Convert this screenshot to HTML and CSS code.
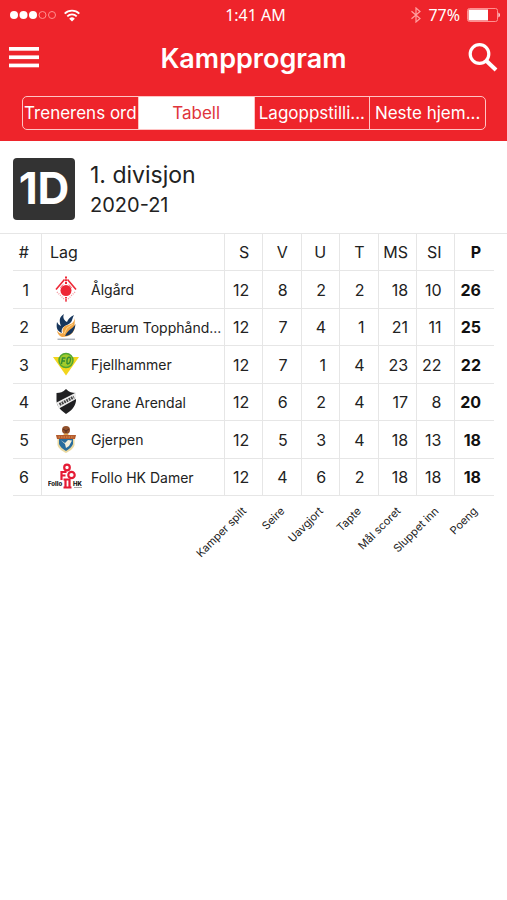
FILE: index.html
```html
<!DOCTYPE html>
<html lang="no">
<head>
  <meta charset="UTF-8">
  <meta name="viewport" content="width=device-width, initial-scale=1.0">
  <title>Kampprogram</title>
  <link rel="stylesheet" href="styles.css">
</head>
<body>

  <header class="top">
    <div class="status-bar">
      <div class="status-left">
        <svg width="46" height="10" viewBox="0 0 46 10">
          <g fill="#fff">
            <circle cx="4" cy="5" r="4"/>
            <circle cx="13.500" cy="5" r="4"/>
            <circle cx="23" cy="5" r="4"/>
          </g>
          <g fill="none" stroke="#ff8f8f" stroke-width="1">
            <circle cx="32.500" cy="5" r="3.500"/>
            <circle cx="42" cy="5" r="3.500"/>
          </g>
        </svg>
        <svg width="16" height="13" viewBox="0 0 16 13">
          <g fill="none" stroke="#fff" stroke-width="1.800">
            <path d="M0.700 4.600a10.300 10.300 0 0 1 14.600 0"/>
            <path d="M3.300 7.400a6.600 6.600 0 0 1 9.400 0"/>
          </g>
          <path d="M8 12.600L5.200 9.700a4 4 0 0 1 5.600 0z" fill="#fff"/>
        </svg>
      </div>
      <div class="status-time">1:41 AM</div>
      <div class="status-right">
        <svg width="10" height="16" viewBox="0 0 10 16">
          <path d="M0.500 4.200L9 11.500L5 15V1L9 4.500L0.500 11.800" fill="none" stroke="#ffa0a0" stroke-width="1.200"/>
        </svg>
        <span>77%</span>
        <svg width="34" height="14" viewBox="0 0 34 14">
          <rect x="0.500" y="0.500" width="30" height="13" rx="2" fill="none" stroke="#ff9090"/>
          <rect x="1.500" y="1.500" width="19.500" height="11" fill="#fff"/>
          <path d="M31.500 4.500a3 3 0 0 1 0 5z" fill="#fff"/>
        </svg>
      </div>
    </div>

    <div class="navbar">
      <button class="icon-btn" aria-label="Meny">
        <svg width="30" height="22" viewBox="0 0 30 22" fill="#fff">
          <rect y="0" width="30" height="3.700"/>
          <rect y="8.400" width="30" height="3.700"/>
          <rect y="16.600" width="30" height="3.700"/>
        </svg>
      </button>
      <h1>Kampprogram</h1>
      <button class="icon-btn" aria-label="Søk">
        <svg width="30" height="30" viewBox="0 0 30 30" fill="none" stroke="#fff">
          <circle cx="11.500" cy="11" r="9.300" stroke-width="3.200"/>
          <path d="M18 17.500L28 27" stroke-width="4"/>
        </svg>
      </button>
    </div>

    <nav class="tabs">
      <button class="tab">Trenerens ord</button>
      <button class="tab active">Tabell</button>
      <button class="tab">Lagoppstilli...</button>
      <button class="tab">Neste hjem...</button>
    </nav>
  </header>

  <section class="division">
    <div class="badge">1D</div>
    <div>
      <h2>1. divisjon</h2>
      <p>2020-21</p>
    </div>
  </section>

  <div class="table-wrap">
    <table class="standings">
      <colgroup>
        <col class="col-rank">
        <col class="col-team">
        <col span="7">
      </colgroup>
      <thead>
        <tr><th>#</th><th class="team-head">Lag</th><th>S</th><th>V</th><th>U</th><th>T</th><th class="ms">MS</th><th>SI</th><th class="points">P</th></tr>
      </thead>
      <tbody>
        <tr>
          <td>1</td>
          <td><div class="team">
            <svg width="36" height="28" viewBox="0 0 36 28">
              <circle cx="18" cy="14.500" r="5.500" fill="#ee2836"/>
              <g fill="none" stroke="#ee2836">
                <path d="M8 13.500L16.500 3.500M28 13.500L19.500 3.500" stroke-width="1.600"/>
                <path d="M18 0.500V9" stroke-width="2" stroke-dasharray="2 .8"/>
                <path d="M12.500 11.500L15.500 8M23.500 11.500L20.500 8" stroke-width="1" stroke-dasharray="1.500 .8"/>
                <path d="M9 16L16.500 23.500M27 16L19.500 23.500" stroke="#f59aa0" stroke-width="1.400" stroke-dasharray="1 1.200"/>
                <path d="M18 21V26" stroke-width="2" stroke-dasharray="1.500 .8"/>
              </g>
            </svg>
            <span>Ålgård</span>
          </div></td>
          <td>12</td><td>8</td><td>2</td><td>2</td><td class="ms">18</td><td>10</td><td class="points">26</td>
        </tr>
        <tr>
          <td>2</td>
          <td><div class="team">
            <svg width="36" height="28" viewBox="0 0 36 28">
              <path d="M16 1C14 5 17 8 19 9C20 6 22 4 26 2C23 8 25 9 19 12C14 14 13 17 14 20C9 18 8 15 9 9C10 11 11 12 13 13C11 8 11 4 16 1z" fill="#17365c"/>
              <path d="M27 5C27 9 26 11 27 14C26 20 22 24 14 24C11 23 9 20 9 17C10 20 13 21 15 20C14 16 15 13 20 12C24 11 26 9 27 5z" fill="#f1a545"/>
              <path d="M27.500 11C25 16 20 16 17 23C23 23 27 18 27.500 11z" fill="#17365c"/>
              <path d="M25 11L19 15L16 21" fill="none" stroke="#fbd58a"/>
              <path d="M9.500 26.200H27" stroke="#8b93a0"/>
            </svg>
            <span>Bærum Topphånd...</span>
          </div></td>
          <td>12</td><td>7</td><td>4</td><td>1</td><td class="ms">21</td><td>11</td><td class="points">25</td>
        </tr>
        <tr>
          <td>3</td>
          <td><div class="team">
            <svg width="36" height="28" viewBox="0 0 36 28">
              <path d="M5 6H31L18 24.500z" fill="#f2d51d"/>
              <circle cx="18" cy="9.500" r="7" fill="#a2cb2b" stroke="#51a532" stroke-width="1.500"/>
              <path d="M13.500 13L14.500 7H17.500M14 10H17M19 13V9C19 6 22.500 5 22.500 8C22.500 11 21 13 19 13" fill="none" stroke="#338b32" stroke-width="1.400"/>
            </svg>
            <span>Fjellhammer</span>
          </div></td>
          <td>12</td><td>7</td><td>1</td><td>4</td><td class="ms">23</td><td>22</td><td class="points">22</td>
        </tr>
        <tr>
          <td>4</td>
          <td><div class="team">
            <svg width="36" height="28" viewBox="0 0 36 28">
              <path d="M18 1C15 4 12 5 8.500 5V13C9 19 14 23 18 26C23 23 27 19 28 13V5C24 5 21 4 18 1z" fill="#202022"/>
              <path d="M8.500 14.500L28 4.500V11L11 20.500z" fill="#eee"/>
              <path d="M11.500 16.500L26 9" stroke="#444" stroke-width="3" stroke-dasharray="1.800 .8"/>
            </svg>
            <span>Grane Arendal</span>
          </div></td>
          <td>12</td><td>6</td><td>2</td><td>4</td><td class="ms">17</td><td>8</td><td class="points">20</td>
        </tr>
        <tr>
          <td>5</td>
          <td><div class="team">
            <svg width="36" height="28" viewBox="0 0 36 28">
              <path d="M8 9H28L26.500 13V19C26 22 22 25 18 27C14 25 10 22 9.500 19V13z" fill="#ead9a1"/>
              <path d="M11 13H25V18C24 21 21 23 18 25C15 23 12 21 11 18z" fill="#286c9d"/>
              <path d="M12.500 14L17 17L20 14L24 14.500L21 20L18 22L17 18z" fill="#f6efda"/>
              <path d="M8 9H28L27 13H9z" fill="#b35a2e"/>
              <path d="M10.500 11H26" stroke="#e29d57" stroke-dasharray="1.500 1"/>
              <circle cx="18" cy="4" r="4" fill="#91502b"/>
              <path d="M15 3L18 5L21 3M18 5V8" fill="none" stroke="#582f23"/>
              <path d="M15 9L18 7L21 9z" fill="#e4a44e"/>
            </svg>
            <span>Gjerpen</span>
          </div></td>
          <td>12</td><td>5</td><td>3</td><td>4</td><td class="ms">18</td><td>13</td><td class="points">18</td>
        </tr>
        <tr>
          <td>6</td>
          <td><div class="team">
            <svg width="36" height="28" viewBox="0 0 36 28">
              <g fill="none" stroke="#e51b35" stroke-width="2.200">
                <circle cx="19" cy="4.500" r="2.800"/>
                <circle cx="23.500" cy="12" r="3.200"/>
                <path d="M13.500 17V9H18.500M13.500 12.500H17.500"/>
                <path d="M17.500 16V25M21.500 16V25M15.500 24.500H23.500M15.500 16.500H22.500"/>
              </g>
              <text x="0" y="22.500" class="crest-text">Follo</text>
              <text x="25" y="22.500" class="crest-text">HK</text>
              <path d="M26 24.500H34" stroke="#aaa"/>
            </svg>
            <span>Follo HK Damer</span>
          </div></td>
          <td>12</td><td>4</td><td>6</td><td>2</td><td class="ms">18</td><td>18</td><td class="points">18</td>
        </tr>
      </tbody>
      <tfoot>
        <tr>
          <td></td><td></td>
          <td><div class="legend"><span>Kamper spilt</span></div></td>
          <td><div class="legend"><span>Seire</span></div></td>
          <td><div class="legend"><span>Uavgjort</span></div></td>
          <td><div class="legend"><span>Tapte</span></div></td>
          <td><div class="legend"><span>Mål scoret</span></div></td>
          <td><div class="legend"><span>Sluppet inn</span></div></td>
          <td><div class="legend"><span>Poeng</span></div></td>
        </tr>
      </tfoot>
    </table>
  </div>

</body>
</html>
```
FILE: styles.css
```css
* {
  margin: 0;
  padding: 0;
  box-sizing: border-box;
}

body {
  font-family: Inter, "Liberation Sans", sans-serif;
  background-color: #fff;
  color: #222;
}

svg {
  display: block;
  flex: none;
}

button {
  font-family: inherit;
  background: none;
  border: none;
  color: #fff;
  cursor: pointer;
}

/* Red header */
.top {
  background-color: #ee242b;
  color: #fff;
  padding-bottom: 11px;
}

.status-bar {
  display: grid;
  grid-template-columns: 1fr auto 1fr;
  align-items: center;
  height: 30px;
  padding: 0 6px 0 10px;
  font-family: "Noto Sans", sans-serif;
  font-size: 16px;
}

.status-left, .status-right {
  display: flex;
  align-items: center;
  gap: 8px;
}

.status-right {
  justify-content: flex-end;
  gap: 7px;
}

.navbar {
  display: flex;
  justify-content: space-between;
  align-items: center;
  height: 56px;
  padding: 0 9px;
}

.navbar h1 {
  font-size: 27px;
  font-weight: 600;
}

.tabs {
  display: flex;
  height: 34px;
  margin: 10px 21px 0 22px;
  border: 1px solid #ffc4c4;
  border-radius: 5px;
  overflow: hidden;
}

.tab {
  flex: 1 1 0;
  min-width: 0;
  font-size: 17px;
  white-space: nowrap;
  border-left: 1px solid #ffc4c4;
}

.tab:first-child {
  border-left: none;
}

.tab.active {
  background-color: #fff;
  color: #e0343b;
}

/* Division */
.division {
  display: flex;
  align-items: center;
  gap: 15px;
  padding: 17px 13px 13px;
  border-bottom: 1px solid #e6e6e6;
}

.badge {
  width: 62px;
  height: 62px;
  line-height: 60px;
  border-radius: 4px;
  background-color: #333;
  color: #fff;
  font-size: 44px;
  font-weight: 700;
  text-align: center;
}

.division h2 {
  font-size: 23px;
  font-weight: 400;
  line-height: 32px;
}

.division p {
  font-size: 20px;
  line-height: 28px;
}

/* Table */
.table-wrap {
  padding: 0 13px;
}

.standings {
  width: 100%;
  table-layout: fixed;
  border-spacing: 0;
  font-size: 16px;
}

.col-rank {
  width: 29px;
}

.col-team {
  width: 38%;
}

.standings th, .standings td {
  height: 37px;
  padding-right: 13px;
  border-right: 1px solid #e6e6e6;
  border-bottom: 1px solid #e6e6e6;
  font-weight: 400;
  text-align: right;
  white-space: nowrap;
}

.standings tbody tr:nth-child(odd) td {
  height: 38px;
}

.standings th:first-child, .standings td:first-child {
  padding-right: 12px;
}

.standings th:last-child, .standings td:last-child {
  border-right: none;
}

.standings .team-head {
  padding-left: 8px;
  text-align: left;
}

.standings .ms {
  padding-right: 8px;
}

.standings .points {
  color: #111;
  font-weight: 700;
}

.standings td:nth-child(2) {
  padding: 0;
}

.team {
  display: flex;
  align-items: center;
  gap: 7px;
  padding-left: 6px;
  font-size: 14px;
}

.crest-text {
  font-size: 6px;
  font-weight: 800;
  fill: #111;
}

.standings tfoot td {
  height: 70px;
  padding-top: 8px;
  border: none;
  vertical-align: top;
}

.legend {
  display: flex;
  justify-content: flex-end;
  padding-right: 11px;
  font-size: 11px;
  line-height: 14px;
}

.legend span {
  flex: none;
  transform: rotate(-45deg);
  transform-origin: top right;
}
```
